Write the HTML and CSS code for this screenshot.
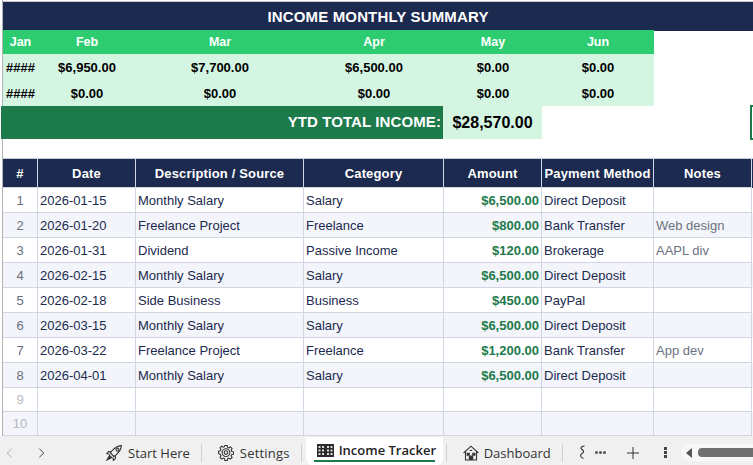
FILE: index.html
```html
<!DOCTYPE html>
<html lang="en">
<head>
<meta charset="utf-8">
<title>Income Tracker</title>
<link rel="stylesheet" href="styles.css">
</head>
<body>
<main class="sheet">
  <h1 class="title">INCOME MONTHLY SUMMARY</h1>
  <section class="summary">
    <div class="months">
      <div>Jan</div><div>Feb</div><div>Mar</div><div>Apr</div><div>May</div><div>Jun</div>
    </div>
    <div class="values">
      <div>####</div><div>$6,950.00</div><div>$7,700.00</div><div>$6,500.00</div><div>$0.00</div><div>$0.00</div>
    </div>
    <div class="values">
      <div>####</div><div>$0.00</div><div>$0.00</div><div>$0.00</div><div>$0.00</div><div>$0.00</div>
    </div>
  </section>
  <div class="ytd">
    <div class="ytd-label">YTD TOTAL INCOME:</div>
    <div class="ytd-value">$28,570.00</div>
    <div class="selected-cell"></div>
  </div>
  <section class="ledger">
    <div class="row head">
      <div>#</div><div>Date</div><div>Description / Source</div><div>Category</div><div>Amount</div><div>Payment Method</div><div>Notes</div>
    </div>
    <div class="row"><div class="num">1</div><div>2026-01-15</div><div>Monthly Salary</div><div>Salary</div><div class="amt">$6,500.00</div><div>Direct Deposit</div><div class="note"></div></div>
    <div class="row"><div class="num">2</div><div>2026-01-20</div><div>Freelance Project</div><div>Freelance</div><div class="amt">$800.00</div><div>Bank Transfer</div><div class="note">Web design</div></div>
    <div class="row"><div class="num">3</div><div>2026-01-31</div><div>Dividend</div><div>Passive Income</div><div class="amt">$120.00</div><div>Brokerage</div><div class="note">AAPL div</div></div>
    <div class="row"><div class="num">4</div><div>2026-02-15</div><div>Monthly Salary</div><div>Salary</div><div class="amt">$6,500.00</div><div>Direct Deposit</div><div class="note"></div></div>
    <div class="row"><div class="num">5</div><div>2026-02-18</div><div>Side Business</div><div>Business</div><div class="amt">$450.00</div><div>PayPal</div><div class="note"></div></div>
    <div class="row"><div class="num">6</div><div>2026-03-15</div><div>Monthly Salary</div><div>Salary</div><div class="amt">$6,500.00</div><div>Direct Deposit</div><div class="note"></div></div>
    <div class="row"><div class="num">7</div><div>2026-03-22</div><div>Freelance Project</div><div>Freelance</div><div class="amt">$1,200.00</div><div>Bank Transfer</div><div class="note">App dev</div></div>
    <div class="row"><div class="num">8</div><div>2026-04-01</div><div>Monthly Salary</div><div>Salary</div><div class="amt">$6,500.00</div><div>Direct Deposit</div><div class="note"></div></div>
    <div class="row blank"><div class="num">9</div><div></div><div></div><div></div><div></div><div></div><div></div></div>
    <div class="row blank"><div class="num">10</div><div></div><div></div><div></div><div></div><div></div><div></div></div>
  </section>
</main>
<footer class="tabbar">
  <div class="nav">
    <svg class="chev dim" viewBox="0 0 8 12"><path d="M6.500 1 1.500 6l5 5"/></svg>
    <svg class="chev" viewBox="0 0 8 12"><path d="M1.500 1l5 5-5 5"/></svg>
  </div>
  <div class="tab">
    <svg class="ico" viewBox="0 0 16 16" fill="none" stroke="#333" stroke-width="1.100"><path d="M15.500.6C11.500 1 8.400 2.800 5.800 6L4.400 8l3.500 3.500 2.200-1.600C13.200 7.300 15 4.500 15.500.6z"/><path d="M5.300 6.700 2.500 6.600.8 8.700l3 .5M9.300 10.700l.1 2.900-2 1.800-.6-3"/><path d="M10.500 3.600a1.400 1.400 0 1 0 2 2 1.400 1.400 0 0 0-2-2z"/><path d="M3.600 10.500 1 14.900l4.600-2.400z" fill="#333"/></svg>
    <span>Start Here</span>
  </div>
  <i class="sep"></i>
  <div class="tab settings">
    <svg class="ico" viewBox="0 0 16 16" fill="none" stroke="#333" stroke-width="1.100"><path d="M6.800 1h2.400l.4 1.900 1.300.6 1.700-1 1.700 1.700-1 1.700.6 1.300 1.900.4v2.400l-1.900.4-.6 1.300 1 1.700-1.700 1.700-1.700-1-1.300.6-.4 1.900H6.800l-.4-1.900-1.300-.6-1.700 1-1.700-1.700 1-1.700-.6-1.300L.2 9.200V6.800l1.900-.4.6-1.300-1-1.700 1.700-1.700 1.700 1 1.300-.6z" transform="translate(.4 -.4) scale(.96)"/><circle cx="8" cy="7.600" r="3.900"/><circle cx="8" cy="7.600" r="1.800"/></svg>
    <span>Settings</span>
  </div>
  <i class="sep"></i>
  <div class="tab active">
    <svg class="ico book" viewBox="0 0 17 13"><path fill="#2b2b2b" d="M0 0h17v13H0z"/><path fill="#dcdcdc" d="M1.500 2h2v2h-2zM5 2h2v2H5zM1.500 5.500h2v2h-2zM5 5.500h2v2H5zM1.500 9h2v2h-2zM5 9h2v2H5zM10 2h2v2h-2zM13.500 2h2v2h-2zM10 5.500h2v2h-2zM13.500 5.500h2v2h-2zM10 9h2v2h-2zM13.500 9h2v2h-2z"/></svg>
    <span>Income Tracker</span>
  </div>
  <i class="sep"></i>
  <div class="tab dashboard">
    <svg class="ico" viewBox="0 0 16 16" fill="none" stroke="#333" stroke-width="1.100"><path d="M.6 8 8 1.200 15.400 8"/><path d="M2.500 6.600V15h11V6.600"/><path d="M6.300 15v-4h3.400v4" fill="#333"/><path d="M4.200 8.300h2v1.800h-2zM9.800 8.300h2v1.800h-2z" fill="#333"/><path d="M6.800 5.500h2.400"/></svg>
    <span>Dashboard</span>
  </div>
  <i class="sep"></i>
  <div class="cut">
    <svg class="squiggle" viewBox="0 0 6 15" fill="none" stroke="#333" stroke-width="1.100"><path d="M5.500 1C2 1.500 1 3 3 4.500s2.500 2.500 0 4-1.500 4 1.500 5"/></svg>
  </div>
  <div class="more"><b></b><b></b><b></b></div>
  <svg class="plus" viewBox="0 0 12 12"><path d="M6 0v12M0 6h12"/></svg>
  <div class="kebab"><b></b><b></b><b></b></div>
  <div class="scroll">
    <i class="arrow"></i>
    <i class="thumb"></i>
  </div>
</footer>
</body>
</html>
```

FILE: styles.css
```css
* { box-sizing: border-box; }

html, body {
  margin: 0;
  height: 465px;
  overflow: hidden;
  background: #fff;
}

body {
  display: flex;
  flex-direction: column;
  font-family: "Liberation Sans", Arial, sans-serif;
  color: #000;
}

.sheet {
  flex: none;
  height: 436px;
  margin-left: 2px;
  padding-top: 1px;
  border-left: 1px solid #b4b4b4;
}

.title {
  margin: 0;
  height: 30px;
  border-top: 1px solid #c8c8c8;
  background: #1b2a4e;
  color: #fff;
  font-size: 15px;
  font-weight: 700;
  line-height: 29px;
  text-align: center;
  letter-spacing: 0.150px;
}

.summary {
  width: 651px;
  margin-top: -1px;
}

.months, .values {
  display: grid;
  grid-template-columns: 35px 98px 168px 140px 98px 112px;
  text-align: center;
  font-weight: 700;
}

.months {
  height: 24px;
  background: #2ecc71;
  color: #fff;
  font-size: 12.500px;
  line-height: 25px;
}

.values {
  height: 26px;
  background: #d5f5e3;
  font-size: 13px;
  line-height: 27px;
}

.ytd {
  display: flex;
  height: 33px;
  margin-left: -2px;
  font-weight: 700;
  font-size: 15px;
  line-height: 32px;
}

.ytd-label {
  width: 442px;
  padding-right: 2px;
  background: #1d7a4b;
  color: #fff;
  text-align: right;
  letter-spacing: 0.100px;
}

.ytd-value {
  width: 99px;
  background: #d5f5e3;
  text-align: center;
  font-size: 16px;
  line-height: 34px;
}

.selected-cell {
  width: 3px;
  height: 35px;
  margin: -1px 0 0 auto;
  border: 2px solid #1d7a4b;
  border-right: 0;
}

.ledger {
  margin-top: 19px;
  border-top: 1px solid #c6ccdc;
  font-size: 13px;
}

.row {
  display: grid;
  grid-template-columns: 35px 98px 168px 140px 98px 112px 98px;
  height: 25px;
  line-height: 25px;
  color: #1b2a4e;
}

.row > div {
  padding: 0 2px;
  border-right: 1px solid #d2d6e4;
  border-bottom: 1px solid #d2d6e4;
  white-space: nowrap;
  overflow: hidden;
}

.row:nth-child(odd) {
  background: #f3f5fa;
}

.row.head {
  height: 29px;
  background: #1b2a4e;
  color: #fff;
  font-weight: 700;
  line-height: 29px;
  text-align: center;
  letter-spacing: 0.150px;
}

.row.blank {
  height: 24px;
  line-height: 24px;
}

.row > .num {
  color: #666e7e;
  text-align: center;
}

.row.blank > .num {
  color: #b4b8c2;
}

.row > .amt {
  color: #1d7a4b;
  font-weight: 700;
  text-align: right;
}

.row > .note {
  color: #6b7280;
}

.tabbar {
  flex: 1;
  display: flex;
  align-items: center;
  padding-top: 4px;
  background: #f0f0f0;
  font-family: "Open Sans", "Noto Sans", sans-serif;
  font-size: 13px;
  color: #333;
}

.nav {
  display: flex;
  gap: 25px;
  width: 106px;
  padding-left: 6px;
}

.chev {
  width: 7px;
  height: 12px;
  fill: none;
  stroke: #444;
  stroke-width: 1.100;
}

.chev.dim {
  stroke: #aaa;
}

.tab {
  display: flex;
  align-items: center;
  gap: 6px;
  white-space: nowrap;
}

.tab.settings {
  letter-spacing: 0.200px;
}

.tab.dashboard {
  gap: 5px;
}

.ico {
  width: 16px;
  height: 16px;
  flex: none;
}

.ico.book {
  width: 17px;
  height: 13px;
}

.sep {
  flex: none;
  width: 1px;
  height: 18px;
  margin: 0 16px 0 11px;
  background: #cfcfcf;
}

.tab.active {
  align-self: stretch;
  position: relative;
  gap: 5px;
  width: 137px;
  margin: -3px -8px 0 -12px;
  padding: 0 0 2px 11px;
  background: #fff;
  border-radius: 0 0 6px 6px;
  font-weight: 600;
  color: #222;
}

.tab.active::after {
  content: "";
  position: absolute;
  left: 8px;
  right: 8px;
  bottom: 3px;
  height: 2px;
  background: #1d7a4b;
}

.cut {
  width: 16px;
}

.squiggle {
  display: block;
  width: 6px;
  height: 15px;
}

.more {
  display: flex;
  gap: 1px;
  width: 32px;
}

.more b {
  width: 3px;
  height: 3px;
  border-radius: 50%;
  background: #555;
}

.plus {
  width: 12px;
  height: 12px;
  stroke: #333;
  stroke-width: 1;
}

.kebab {
  display: flex;
  flex-direction: column;
  gap: 1px;
  margin-left: 25px;
}

.kebab b {
  width: 3px;
  height: 3px;
  background: #444;
}

.scroll {
  flex: 1;
  display: flex;
  align-items: center;
  height: 17px;
  margin-left: 14px;
  padding-left: 5px;
  background: #f7f7f7;
  border-radius: 8px 0 0 8px;
}

.arrow {
  width: 0;
  height: 0;
  border: 5px solid transparent;
  border-left: 0;
  border-right: 6px solid #555;
}

.thumb {
  flex: 1;
  height: 9px;
  margin-left: 6px;
  background: #707070;
  border-radius: 4px 0 0 4px;
}
```
